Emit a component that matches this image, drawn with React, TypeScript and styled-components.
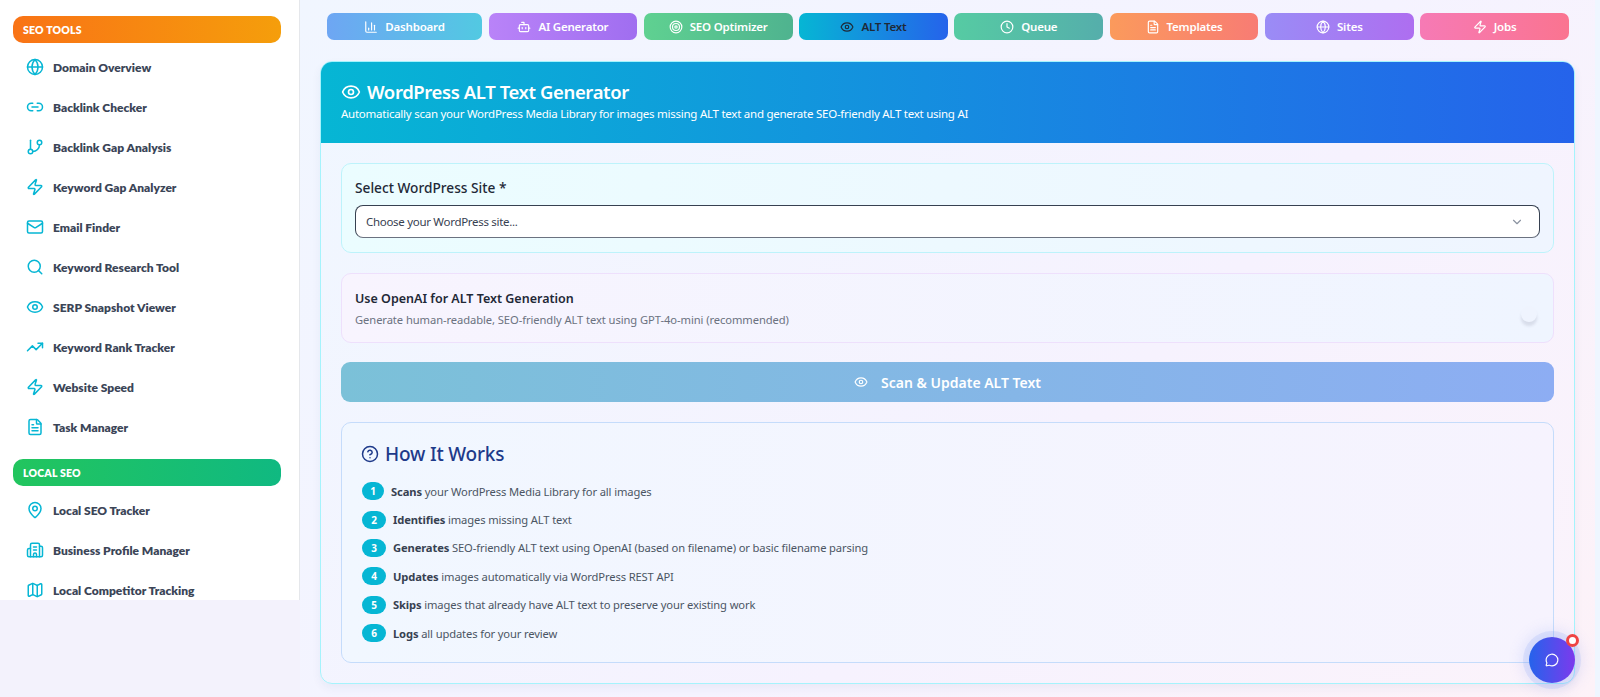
import React from "react";
import styled, { createGlobalStyle } from "styled-components";
import {
  Globe, Link2, GitBranch, Zap, Mail, Search, Eye, TrendingUp, FileText, MapPin, Building2, Map,
  ChartColumn, Bot, Target, Clock, ChevronDown, CircleHelp, MessageCircle,
} from "lucide-react";

const Global = createGlobalStyle`
  html, body { margin: 0; padding: 0; height: 697px; overflow: hidden; background: #eff6ff; }
  body { font-family: "Noto Sans", "Open Sans", Arial, sans-serif; }
  * { box-sizing: border-box; }
`;

const Shell = styled.div`
  display: flex;
  width: 1600px;
  height: 697px;
`;
const LeftColumn = styled.div`
  width: 300px;
  height: 697px;
  background: #f3f2fc;
  flex: none;
`;
const Sidebar = styled.nav`
  width: 300px;
  height: 600px;
  overflow: hidden;
  background: #fff;
  border-right: 1px solid #e5e7eb;
  padding: 16px 18px 0 13px;
  font-family: "Lato", "Noto Sans", sans-serif;
`;
const SectionPill = styled.div<{ $from: string; $to: string }>`
  height: 27px;
  border-radius: 10px;
  background: linear-gradient(90deg, ${p => p.$from}, ${p => p.$to});
  color: #fff;
  font-size: 10.5px;
  font-weight: 800;
  letter-spacing: 0.2px;
  display: flex;
  align-items: center;
  padding-left: 10px;
  margin-bottom: 4px;
`;
const NavItem = styled.div`
  height: 40px;
  display: flex;
  align-items: center;
  gap: 9px;
  padding-left: 13px;
  color: #3b4557;
  font-size: 12px;
  font-weight: 800;
  svg { color: #06b6d4; flex: none; }
`;
const NavGroup = styled.div`
  margin-bottom: 12px;
`;
const Main = styled.main`
  width: 1295px;
  height: 697px;
  flex: none;
  padding: 13px 20px 0;
  background: linear-gradient(135deg, #f1f6ff 0%, #f5f3ff 55%, #fdf2f8 100%);
`;
const Tabs = styled.div`
  display: grid;
  grid-template-columns: 155px repeat(7, 1fr);
  column-gap: 6.5px;
  margin: 0 6px 21px 7px;
`;
const Tab = styled.div<{ $from: string; $to: string; $active?: boolean }>`
  height: 27px;
  border-radius: 7px;
  background: linear-gradient(90deg, ${p => p.$from}, ${p => p.$to});
  color: ${p => (p.$active ? "#1f2937" : "#fff")};
  font-size: 11.5px;
  font-weight: 600;
  letter-spacing: -0.2px;
  display: flex;
  align-items: center;
  justify-content: center;
  gap: 7px;
`;
const Card = styled.section`
  width: 1255px;
  height: 623px;
  border: 1px solid #a5f3fc;
  border-radius: 12px;
  overflow: hidden;
  box-shadow: 0 4px 10px rgba(30, 60, 120, 0.06);
  background: linear-gradient(135deg, #f0f7ff, #f6f2fe 60%, #fbf3fb);
`;
const CardHeader = styled.header`
  height: 81px;
  background: linear-gradient(90deg, #06b6d4, #2563eb);
  color: #fff;
  padding: 16px 20px 0;
`;
const CardTitle = styled.h1`
  margin: 0;
  font-size: 18.5px;
  line-height: 28px;
  font-weight: 600;
  display: flex;
  align-items: center;
  gap: 6px;
  letter-spacing: -0.4px;
`;
const CardSub = styled.p`
  margin: 0;
  font-size: 11.5px;
  line-height: 16px;
  letter-spacing: -0.25px;
`;
const CardBody = styled.div`
  padding: 20px 20px 0;
  display: flex;
  flex-direction: column;
  gap: 20px;
`;
const SitePanel = styled.div`
  height: 90px;
  border: 1px solid #bdf3fb;
  border-radius: 10px;
  background: linear-gradient(90deg, #ebfdff, #eff5ff);
  padding: 15px 13px 0;
`;
const FieldLabel = styled.div`
  font-size: 13.7px;
  line-height: 18px;
  font-weight: 500;
  color: #1f2937;
  margin-bottom: 8px;
`;
const Select = styled.div`
  height: 33px;
  background: #fff;
  border: 1px solid #374151;
  border-bottom-color: #6b7280;
  border-radius: 8px;
  display: flex;
  align-items: center;
  justify-content: space-between;
  padding: 0 15px 0 10px;
  font-size: 11.5px;
  letter-spacing: -0.3px;
  color: #374151;
  svg { color: #8b93a1; }
`;
const TogglePanel = styled.div`
  position: relative;
  height: 70px;
  border: 1px solid #eee0fc;
  border-radius: 10px;
  background: linear-gradient(90deg, #f8f4fe, #eff5ff);
  padding: 15px 13px 0;
`;
const ToggleTitle = styled.div`
  font-size: 12.5px;
  line-height: 20px;
  font-weight: 600;
  color: #1f2937;
`;
const ToggleSub = styled.div`
  font-size: 11.2px;
  line-height: 16px;
  margin-top: 3px;
  letter-spacing: -0.08px;
  color: #6b7280;
`;
const GhostThumb = styled.span`
  position: absolute;
  right: 16px;
  top: 32px;
  width: 16px;
  height: 16px;
  border-radius: 50%;
  background: #eff4fe;
  box-shadow: 0 4px 3px rgba(60, 60, 90, 0.13);
`;
const ScanButton = styled.div`
  height: 40px;
  margin-top: -1px;
  border-radius: 9px;
  background: linear-gradient(90deg, #7bc1d8, #8dadf3);
  color: #fff;
  font-size: 14px;
  font-weight: 600;
  display: flex;
  align-items: center;
  justify-content: center;
  gap: 13px;
`;
const HowPanel = styled.div`
  height: 241px;
  border: 1px solid #c5dcfb;
  border-radius: 10px;
  background: linear-gradient(90deg, #f1f7ff, #f6f3fe);
  padding: 16px 20px 0;
`;
const HowTitle = styled.h2`
  margin: 0 0 8px;
  font-size: 19px;
  line-height: 30px;
  font-weight: 500;
  color: #1e3a8a;
  display: flex;
  align-items: center;
  gap: 6px;
  letter-spacing: -0.2px;
  svg { margin-left: -1px; }
`;
const Steps = styled.ol`
  margin: 0;
  padding: 0;
  list-style: none;
`;
const Step = styled.li`
  height: 28.4px;
  display: flex;
  align-items: center;
  gap: 7px;
  font-size: 11.2px;
  letter-spacing: -0.13px;
  color: #4b5563;
  b { color: #374151; font-weight: 700; }
`;
const StepBadge = styled.span<{ $first?: boolean }>`
  width: ${p => (p.$first ? 22 : 24)}px;
  height: 18px;
  border-radius: 9px;
  background: #06b6d4;
  color: #fff;
  font-size: 10px;
  font-weight: 700;
  display: flex;
  align-items: center;
  justify-content: center;
  flex: none;
`;
const ChatButton = styled.div`
  position: fixed;
  left: 1529px;
  top: 637px;
  width: 46px;
  height: 46px;
  border-radius: 50%;
  background: linear-gradient(90deg, #2563eb, #7c3aed);
  box-shadow: 0 0 0 6px rgba(120, 150, 240, 0.16), 0 0 14px 8px rgba(120, 150, 240, 0.16);
  color: #fff;
  display: flex;
  align-items: center;
  justify-content: center;
`;
const ChatDot = styled.span`
  position: absolute;
  right: -4px;
  top: -3.5px;
  width: 13px;
  height: 13px;
  border-radius: 50%;
  background: #fff;
  border: 3.3px solid #ef4444;
`;

const seo = [
  [Globe, "Domain Overview"], [Link2, "Backlink Checker"], [GitBranch, "Backlink Gap Analysis"],
  [Zap, "Keyword Gap Analyzer"], [Mail, "Email Finder"], [Search, "Keyword Research Tool"],
  [Eye, "SERP Snapshot Viewer"], [TrendingUp, "Keyword Rank Tracker"], [Zap, "Website Speed"],
  [FileText, "Task Manager"],
] as const;
const local = [
  [MapPin, "Local SEO Tracker"], [Building2, "Business Profile Manager"], [Map, "Local Competitor Tracking"],
] as const;
const tabs = [
  [ChartColumn, "Dashboard", "#6ea6f3", "#52c9e2"], [Bot, "AI Generator", "#b983f8", "#a06ef0"],
  [Target, "SEO Optimizer", "#5fd191", "#4fb38f"], [Eye, "ALT Text", "#06b6d4", "#2563eb"],
  [Clock, "Queue", "#56cba3", "#55aeab"], [FileText, "Templates", "#fb9a5c", "#f87c74"],
  [Globe, "Sites", "#9a8cf6", "#ae6ef0"], [Zap, "Jobs", "#f67ab5", "#fa7490"],
] as const;
const steps = [
  ["Scans", "your WordPress Media Library for all images"],
  ["Identifies", "images missing ALT text"],
  ["Generates", "SEO-friendly ALT text using OpenAI (based on filename) or basic filename parsing"],
  ["Updates", "images automatically via WordPress REST API"],
  ["Skips", "images that already have ALT text to preserve your existing work"],
  ["Logs", "all updates for your review"],
];

export default function App() {
  return (
    <Shell>
      <Global />
      <LeftColumn>
        <Sidebar>
          <SectionPill $from="#f97316" $to="#f59e0b">SEO TOOLS</SectionPill>
          <NavGroup>
            {seo.map(([I, t]) => <NavItem key={t}><I size={18} />{t}</NavItem>)}
          </NavGroup>
          <SectionPill $from="#22c55e" $to="#10b981">LOCAL SEO</SectionPill>
          {local.map(([I, t]) => <NavItem key={t}><I size={18} />{t}</NavItem>)}
        </Sidebar>
      </LeftColumn>
      <Main>
        <Tabs>
          {tabs.map(([I, t, a, b]) => (
            <Tab key={t} $from={a} $to={b} $active={t === "ALT Text"}><I size={14} />{t}</Tab>
          ))}
        </Tabs>
        <Card>
          <CardHeader>
            <CardTitle><Eye size={20} />WordPress ALT Text Generator</CardTitle>
            <CardSub>Automatically scan your WordPress Media Library for images missing ALT text and generate SEO-friendly ALT text using AI</CardSub>
          </CardHeader>
          <CardBody>
            <SitePanel>
              <FieldLabel>Select WordPress Site *</FieldLabel>
              <Select>Choose your WordPress site...<ChevronDown size={14} /></Select>
            </SitePanel>
            <TogglePanel>
              <ToggleTitle>Use OpenAI for ALT Text Generation</ToggleTitle>
              <ToggleSub>Generate human-readable, SEO-friendly ALT text using GPT-4o-mini (recommended)</ToggleSub>
              <GhostThumb />
            </TogglePanel>
            <ScanButton><Eye size={14} />Scan &amp; Update ALT Text</ScanButton>
            <HowPanel>
              <HowTitle><CircleHelp size={18} />How It Works</HowTitle>
              <Steps>
                {steps.map(([b, t], i) => (
                  <Step key={b}><StepBadge $first={i === 0}>{i + 1}</StepBadge><span><b>{b}</b> {t}</span></Step>
                ))}
              </Steps>
            </HowPanel>
          </CardBody>
        </Card>
      </Main>
      <ChatButton><MessageCircle size={14} /><ChatDot /></ChatButton>
    </Shell>
  );
}
